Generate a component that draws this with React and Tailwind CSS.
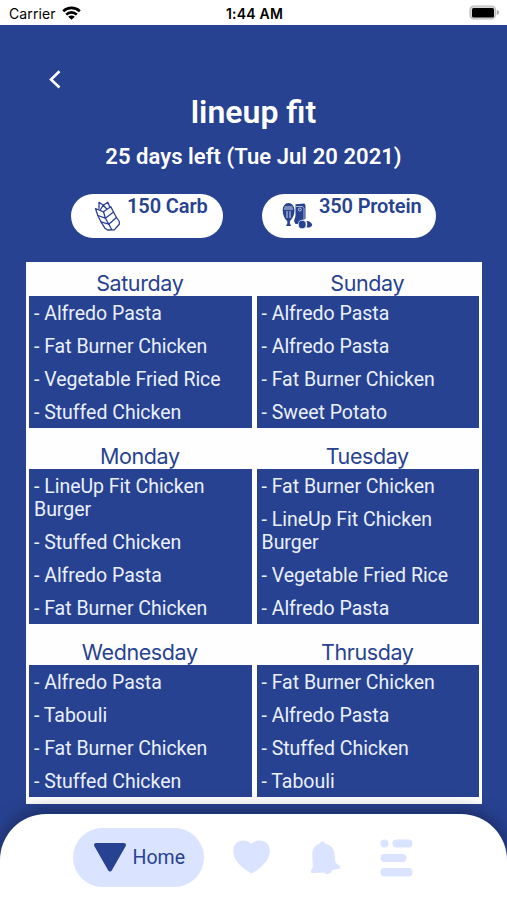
import React from 'react';

const days = [
    { name: 'Saturday', meals: ['Alfredo Pasta', 'Fat Burner Chicken', 'Vegetable Fried Rice', 'Stuffed Chicken'] },
    { name: 'Sunday', meals: ['Alfredo Pasta', 'Alfredo Pasta', 'Fat Burner Chicken', 'Sweet Potato'] },
    { name: 'Monday', meals: ['LineUp Fit Chicken Burger', 'Stuffed Chicken', 'Alfredo Pasta', 'Fat Burner Chicken'] },
    { name: 'Tuesday', meals: ['Fat Burner Chicken', 'LineUp Fit Chicken Burger', 'Vegetable Fried Rice', 'Alfredo Pasta'] },
    { name: 'Wednesday', meals: ['Alfredo Pasta', 'Tabouli', 'Fat Burner Chicken', 'Stuffed Chicken'] },
    { name: 'Thrusday', meals: ['Fat Burner Chicken', 'Alfredo Pasta', 'Stuffed Chicken', 'Tabouli'] },
];

const StatusBar = () => (
    <div className="h-[25px] bg-white text-black grid grid-cols-3 items-center pl-[9px] pr-[7px] pt-[2px] font-['Inter',sans-serif] text-[14px] leading-[20px]">
        <div className="flex items-center gap-[6px]">
            <span className="tracking-[0.1px]">Carrier</span>
            <svg width="19" height="14" viewBox="0 0 19 14" fill="none" stroke="#000" strokeWidth="2.7" className="-mt-[2px]">
                <path d="M1.2 5.2C5.8.8 13.2.8 17.8 5.2" />
                <path d="M4.2 8.6c3-2.9 7.6-2.9 10.6 0" />
                <path d="M9.5 13.8 6.2 10.7c1.8-1.6 4.8-1.6 6.600 0z" fill="#000" stroke="none" />
            </svg>
        </div>
        <div className="text-center font-semibold whitespace-nowrap tracking-[0.2px]">1:44 AM</div>
        <svg width="31" height="15" viewBox="0 0 31 15" className="justify-self-end -mt-[2px]">
            <rect x="1" y="1" width="25.5" height="13" rx="4" fill="#d8d8d8" stroke="#bcbcbc" strokeWidth="1.2" />
            <rect x="3" y="3" width="22" height="9.5" rx="1.5" fill="#000" />
            <path d="M27.8 5v5c1.600-.5 2.200-1.400 2.200-2.500s-.6-2-2.200-2.500z" fill="#aaa" />
        </svg>
    </div>
);

const WheatIcon = () => (
    <svg width="28" height="32" viewBox="0 0 28 32" fill="none" stroke="#284292" strokeWidth="1.3" strokeLinejoin="round" strokeLinecap="round">
        <path d="M6 8.5V2.300l4.300 2.900L14.800 2.300 17 7.500" />
        <path d="M10.300 5.200 7.500 9.500M10.300 5.200l3.200 3.500" />
        <path d="M2.500 8.500l8 3.300 1.900 6.400-7.600-2.700z" />
        <path d="M10.500 11.800l7.300-5.100 2.700 5.300-8.100 6.200" />
        <path d="M4.800 15.500l3.200 6.300 7.800 2.400-3.400-6" />
        <path d="M20.500 12l3 5.500-7.700 6.700" />
        <path d="M8 21.800l4 6.500M15.800 24.200l3 5.600M23.500 17.500l2.800 4v2.700l-5 5.700-6.800.1-2.500-1.700" />
    </svg>
);

const ProteinIcon = () => (
    <svg width="31" height="28" viewBox="0 0 31 28" fill="#284292">
        <path d="M6.500 1c3.600 0 6 3.200 6 7.600 0 4.500-2.300 8.400-4.600 10.600v2.300l1.300 2.400H4l1.300-2.400v-2.300C2.800 17 .7 13.100.7 8.600.7 4.200 3 1 6.500 1z" />
        <path d="M2 7h9M5 9v7M8 9v7M2.500 5h8" stroke="#fff" strokeWidth=".8" fill="none" />
        <path d="M13.500 2.200 22.500 1.500l1 2V17l-3.500 1-2.500 4h-4L12 19l1.500-5z" />
        <path d="M14 4.500h6.500l1.500 2V17" stroke="#fff" strokeWidth=".6" fill="none" />
        <circle cx="17.8" cy="7.5" r="1.5" stroke="#fff" strokeWidth=".7" />
        <ellipse cx="20.2" cy="22.5" rx="3.9" ry="4.2" stroke="#fff" strokeWidth=".7" />
        <path d="M24.5 19c2.800-.3 5.300 1.900 5.800 3.900-.5 1.900-3.400 3-5.800 2.600 1-2.200 1-4.300 0-6.500z" />
    </svg>
);

const DayCard = ({ day }) => (
    <div className="flex flex-col">
        <h2 className="h-[28px] leading-[31px] text-center text-[#284292] text-[21.5px] tracking-[-0.4px] pr-[1px] font-['Inter',sans-serif]">{day.name}</h2>
        <ul className="flex-1 bg-[#284292] text-[#eaf0ff] text-[19.5px] font-[Roboto,sans-serif] px-[5px]">
            {day.meals.map((meal, i) => (
                <li key={i} className="pt-[6px] pb-[4px] leading-[23px] tracking-[-0.02px]">- {meal}</li>
            ))}
        </ul>
    </div>
);

const BottomNav = () => (
    <nav className="relative h-[86px] shrink-0 bg-white rounded-t-[46px] shadow-[0_-4px_18px_rgba(0,0,0,0.35)] flex items-start pt-[14px] pl-[73px]">
        <div className="w-[131px] h-[59px] rounded-full bg-[#dae3ff] flex items-center pl-[20px] text-[#284292]">
            <svg width="34" height="31" viewBox="0 0 34 31" fill="#284292" stroke="#284292" strokeWidth="4" strokeLinejoin="round">
                <path d="M3 3h28L17 27.5z" />
            </svg>
            <span className="ml-[5.5px] text-[19.5px] font-[Roboto,sans-serif]">Home</span>
        </div>
        <svg width="37" height="34" viewBox="0 0 37 34" fill="#dae3ff" className="ml-[29px] mt-[12px]">
            <path d="M18.500 33.500C10 28.500.3 21 .3 11.200.3 4.500 4.800.6 10 .6c3.600 0 6.700 1.300 8.500 3.300C20.300 1.900 23.400.6 27 .6c5.200 0 9.800 3.900 9.800 10.600 0 9.800-9.800 17.300-18.300 22.300z" />
        </svg>
        <svg width="32" height="35" viewBox="0 0 32 35" fill="#dae3ff" className="ml-[40px] mt-[13px]">
            <path d="M10.800 1.300c.5-1.500 2.600-1.500 3.200 0l.8 1.300c5.500 1 9 4.400 9.600 9.300l.6 7.500c.2 2.300 1.700 3.700 4.500 4.900 1.500.7 1.200 3.100-.4 3.400l-6.800 1.200c-1.400 4-5 5.600-8.500 2.600L2.500 32c-1.800.2-2.300-2.200-1.200-3.300 1.800-1.700 1.500-3.500 1.400-5.700L2.300 13.500C2.200 8.100 5 4 10 2.600z" />
        </svg>
        <svg width="33" height="38" viewBox="0 0 33 38" fill="#dae3ff" className="ml-[37.5px] mt-[10.5px]">
            <rect x="0.5" y="0.5" width="8" height="8" rx="4" />
            <rect x="12.5" y="0.5" width="20" height="8" rx="4" />
            <rect x="0.5" y="15" width="26" height="8" rx="4" />
            <rect x="0.5" y="29" width="32" height="8.500" rx="4" />
        </svg>
    </nav>
);

const App = () => (
    <div className="w-[507px] h-[900px] overflow-hidden bg-[#284292] flex flex-col font-[Roboto,sans-serif]">
        <StatusBar />
        <div className="flex-1 flex flex-col">
            <svg width="14" height="20" viewBox="0 0 14 20" fill="none" stroke="#fff" strokeWidth="2.6" className="ml-[48px] mt-[44px]">
                <path d="M11.500 2.200 3 10.500l8.500 8" />
            </svg>
            <h1 className="mt-[4px] text-center text-white font-semibold text-[32px] leading-[38px]">lineup fit</h1>
            <p className="mt-[13px] text-center text-white font-semibold text-[22px] leading-[26px] tracking-[0.05px]">25 days left (Tue Jul 20 2021)</p>
            <div className="mt-[24px] pl-[71px] flex gap-[39px] text-[#284292] text-[20px] leading-[24px] font-semibold">
                <div className="w-[152px] h-[44px] rounded-full bg-white flex pl-[22px]">
                    <div className="mt-[6px] w-[28px]"><WheatIcon /></div>
                    <span className="ml-[6px] whitespace-nowrap tracking-[-0.1px]">150 Carb</span>
                </div>
                <div className="w-[174px] h-[44px] rounded-full bg-white flex pl-[20px]">
                    <div className="mt-[8px] w-[31px]"><ProteinIcon /></div>
                    <span className="ml-[6px] whitespace-nowrap tracking-[-0.15px]">350 Protein</span>
                </div>
            </div>
            <div className="mt-[24px] mx-[26px] w-[456px] h-[542px] bg-[#fefeff] px-[3px] pt-[6px] grid grid-cols-2 gap-x-[5px] gap-y-[13px] content-start">
                {days.map((day) => <DayCard key={day.name} day={day} />)}
            </div>
        </div>
        <BottomNav />
    </div>
);

export default App;
